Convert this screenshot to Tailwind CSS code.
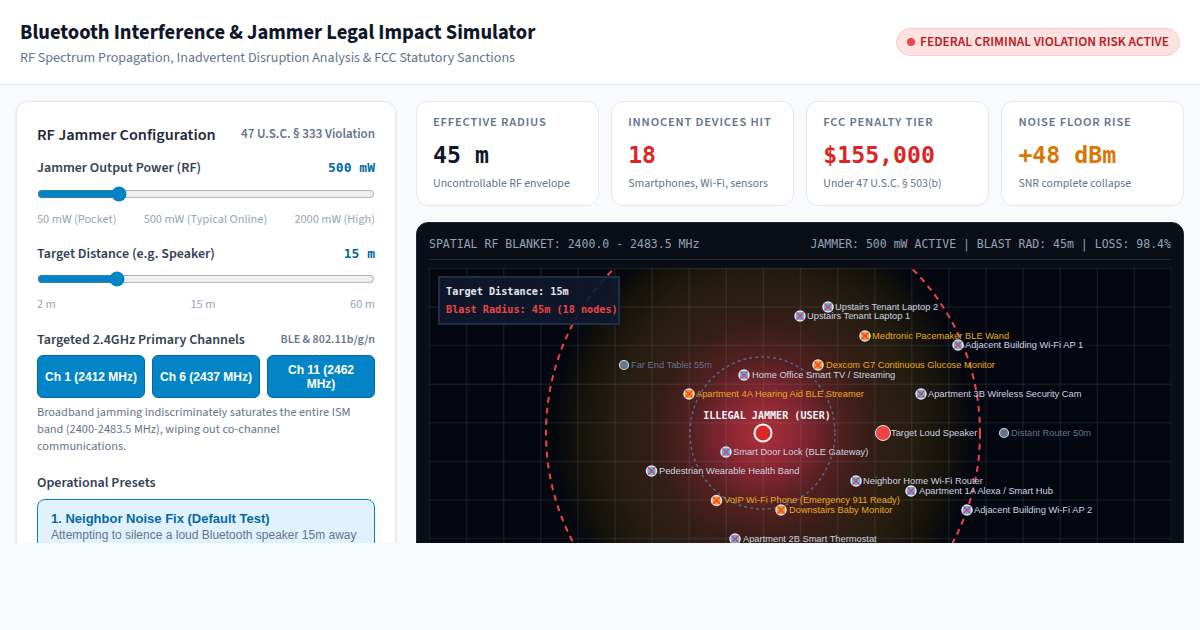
<!DOCTYPE html>
<html lang="en">
<head>
  <meta charset="UTF-8">
  <title>Bluetooth Interference & Jammer Legal Impact Simulator</title>
  <script src="https://cdn.jsdelivr.net/npm/@tailwindcss/browser@4"></script>
</head>
<body class="h-[630px] overflow-hidden bg-[#f8fafc] font-['Source_Sans_3','Noto_Sans',sans-serif] text-[#0f172a]">

  <!-- Header -->
  <header class="flex h-[85px] items-center justify-between border-b border-[#e2e8f0] bg-white px-5">
    <div class="pt-[2px]">
      <h1 class="text-[20.5px] leading-[30px] font-bold text-[#0f172a]">Bluetooth Interference &amp; Jammer Legal Impact Simulator</h1>
      <p class="text-[14.05px] leading-[20px] text-[#64748b]">RF Spectrum Propagation, Inadvertent Disruption Analysis &amp; FCC Statutory Sanctions</p>
    </div>
    <div class="flex items-center gap-[5px] rounded-full border border-[#fecaca] bg-[#fee2e2] px-[10px] py-[5px] text-[13.45px] leading-[16px] font-semibold text-[#b91c1c]">
      <span class="h-2 w-2 rounded-full bg-[#ef4444]"></span>
      FEDERAL CRIMINAL VIOLATION RISK ACTIVE
    </div>
  </header>

  <main class="flex h-[458px] items-start gap-5 overflow-hidden p-4">
    <!-- Config panel -->
    <section class="w-[380px] shrink-0 rounded-xl border border-[#e2e8f0] bg-white px-5 pt-[21px] pb-5 shadow-sm">
      <div class="flex items-center justify-between">
        <h2 class="text-[16.25px] leading-[24px] font-semibold text-[#1e293b]">RF Jammer Configuration</h2>
        <span class="text-[13px] font-semibold text-[#64748b]">47 U.S.C. § 333 Violation</span>
      </div>

      <div class="mt-[11px] flex items-center justify-between">
        <label class="text-[14px] leading-[20px] font-semibold text-[#334155]">Jammer Output Power (RF)</label>
        <span class="font-['DejaVu_Sans_Mono',monospace] text-[13px] font-bold text-[#0369a1]">500 mW</span>
      </div>
      <input type="range" min="50" max="2000" value="500" class="mt-[8px] block h-[16px] w-full accent-[#0284c7]">
      <div class="mt-[9px] flex justify-between text-[12.3px] leading-[16px] text-[#94a3b8]">
        <span>50 mW (Pocket)</span><span>500 mW (Typical Online)</span><span>2000 mW (High)</span>
      </div>

      <div class="mt-[17px] flex items-center justify-between">
        <label class="text-[14px] leading-[20px] font-semibold text-[#334155]">Target Distance (e.g. Speaker)</label>
        <span class="font-['DejaVu_Sans_Mono',monospace] text-[13px] font-bold text-[#0369a1]">15 m</span>
      </div>
      <input type="range" min="2" max="60" value="15" class="mt-[7px] block h-[16px] w-full accent-[#0284c7]">
      <div class="mt-[9px] flex justify-between text-[12.3px] leading-[16px] text-[#94a3b8]">
        <span>2 m</span><span>15 m</span><span>60 m</span>
      </div>

      <div class="mt-[18px] flex items-center justify-between">
        <label class="text-[14px] leading-[20px] font-semibold text-[#334155]">Targeted 2.4GHz Primary Channels</label>
        <span class="text-[12px] font-semibold text-[#64748b]">BLE &amp; 802.11b/g/n</span>
      </div>
      <div class="mt-[5px] grid grid-cols-3 gap-[7px] font-['Liberation_Sans',sans-serif] text-[12px] leading-[14px] font-bold text-white">
        <button class="h-[43px] rounded-md border border-[#0369a1] bg-[#0284c7] px-1">Ch 1 (2412 MHz)</button>
        <button class="h-[43px] rounded-md border border-[#0369a1] bg-[#0284c7] px-1">Ch 6 (2437 MHz)</button>
        <button class="h-[43px] rounded-md border border-[#0369a1] bg-[#0284c7] px-1">Ch 11 (2462 MHz)</button>
      </div>
      <p class="mt-[6px] pr-[14px] text-[12.3px] leading-[17px] text-[#64748b]">Broadband jamming indiscriminately saturates the entire ISM band (2400-2483.5 MHz), wiping out co-channel communications.</p>

      <h3 class="mt-[18px] text-[14px] leading-[20px] font-semibold text-[#334155]">Operational Presets</h3>
      <button class="mt-[6px] block w-full rounded-lg border border-[#0284c7] bg-[#e0f2fe] px-[13px] py-[10px] text-left font-['Liberation_Sans',sans-serif]">
        <span class="block text-[13px] leading-[17px] font-bold text-[#0369a1]">1. Neighbor Noise Fix (Default Test)</span>
        <span class="block text-[12px] leading-[17px] text-[#64748b]">Attempting to silence a loud Bluetooth speaker 15m away</span>
      </button>
    </section>

    <!-- Results -->
    <div class="min-w-0 flex-1">
      <div class="grid grid-cols-4 gap-[12.5px]">
        <div class="h-[105px] rounded-xl border border-[#e2e8f0] bg-white px-4 pt-[11px]">
          <div class="text-[12.5px] leading-[18px] font-semibold tracking-[0.85px] text-[#64748b]">EFFECTIVE RADIUS</div>
          <div class="mt-[8px] font-['DejaVu_Sans_Mono',monospace] text-[23.2px] leading-[32px] font-bold text-[#0f172a]">45 m</div>
          <div class="mt-[5px] text-[11.84px] leading-[16px] text-[#64748b]">Uncontrollable RF envelope</div>
        </div>
        <div class="h-[105px] rounded-xl border border-[#e2e8f0] bg-white px-4 pt-[11px]">
          <div class="text-[12.5px] leading-[18px] font-semibold tracking-[0.85px] text-[#64748b]">INNOCENT DEVICES HIT</div>
          <div class="mt-[8px] font-['DejaVu_Sans_Mono',monospace] text-[23.2px] leading-[32px] font-bold text-[#dc2626]">18</div>
          <div class="mt-[5px] text-[11.84px] leading-[16px] text-[#64748b]">Smartphones, Wi-Fi, sensors</div>
        </div>
        <div class="h-[105px] rounded-xl border border-[#e2e8f0] bg-white px-4 pt-[11px]">
          <div class="text-[12.5px] leading-[18px] font-semibold tracking-[0.85px] text-[#64748b]">FCC PENALTY TIER</div>
          <div class="mt-[8px] font-['DejaVu_Sans_Mono',monospace] text-[23.2px] leading-[32px] font-bold text-[#dc2626]">$155,000</div>
          <div class="mt-[5px] text-[11.84px] leading-[16px] text-[#64748b]">Under 47 U.S.C. § 503(b)</div>
        </div>
        <div class="h-[105px] rounded-xl border border-[#e2e8f0] bg-white px-4 pt-[11px]">
          <div class="text-[12.5px] leading-[18px] font-semibold tracking-[0.85px] text-[#64748b]">NOISE FLOOR RISE</div>
          <div class="mt-[8px] font-['DejaVu_Sans_Mono',monospace] text-[23.2px] leading-[32px] font-bold text-[#d97706]">+48 dBm</div>
          <div class="mt-[5px] text-[11.84px] leading-[16px] text-[#64748b]">SNR complete collapse</div>
        </div>
      </div>

      <!-- Spatial map -->
      <div class="mt-4 h-[500px] rounded-xl border border-[#1e293b] bg-[#0a0e17] px-[12px] pt-[12px]">
        <div class="flex h-[25px] items-start justify-between border-b border-[#1e293b] font-['DejaVu_Sans_Mono',monospace] text-[11.52px] leading-[18px] text-[#94a3b8]">
          <span>SPATIAL RF BLANKET: 2400.0 - 2483.5 MHz</span>
          <span>JAMMER: 500 mW ACTIVE | BLAST RAD: 45m | LOSS: 98.4%</span>
        </div>
        <div class="relative mt-[8px]">
          <svg class="block" width="742" height="460" viewBox="429 268 742 460" font-family="Liberation Sans, sans-serif" font-size="9.3">
            <defs>
              <radialGradient id="glow" gradientUnits="userSpaceOnUse" cx="0" cy="0" r="1" gradientTransform="translate(763 433) scale(217 226)">
                <stop offset="0" stop-color="#b0303a"/>
                <stop offset="0.2" stop-color="#7e2530"/>
                <stop offset="0.33" stop-color="#54201f"/>
                <stop offset="0.5" stop-color="#351e16"/>
                <stop offset="0.7" stop-color="#241d0f"/>
                <stop offset="0.88" stop-color="#12100c"/>
                <stop offset="1" stop-color="#05080f" stop-opacity="0"/>
              </radialGradient>
              <g id="hit">
                <circle r="5" fill="#4db8ec" stroke="#e2e8f0" stroke-width="1.5"/>
                <path d="M-3.5 -3.5 3.5 3.5M3.5 -3.5 -3.5 3.5" stroke="#e5405a" stroke-width="1.5"/>
              </g>
              <g id="crit">
                <circle r="5" fill="#f59e0b" stroke="#e2e8f0" stroke-width="1.5"/>
                <path d="M-3.5 -3.5 3.5 3.5M3.5 -3.5 -3.5 3.5" stroke="#ef4444" stroke-width="1.5"/>
              </g>
              <g id="safe">
                <circle r="4.5" fill="#64748b" stroke="#cbd5e1" stroke-width="1.2"/>
              </g>
            </defs>
            <rect x="429" y="268" width="742" height="460" fill="#04070f"/>
            <ellipse cx="763" cy="433" rx="217" ry="226" fill="url(#glow)"/>
            <g stroke="#94a3b8" stroke-opacity="0.11" stroke-width="1.5" fill="none">
              <path d="M429.5 268V728M466.6 268V728M503.7 268V728M540.8 268V728M577.9 268V728M615 268V728M652.1 268V728M689.2 268V728M726.3 268V728M763.4 268V728M800.5 268V728M837.6 268V728M874.7 268V728M911.8 268V728M948.9 268V728M986 268V728M1023.1 268V728M1060.2 268V728M1097.3 268V728M1134.4 268V728M1171 268V728"/>
              <path d="M429 268.5H1171M429 307H1171M429 345.6H1171M429 384.2H1171M429 422.8H1171M429 461.4H1171M429 500H1171M429 538.6H1171"/>
            </g>
            <ellipse cx="763" cy="433" rx="217" ry="226" fill="none" stroke="#ef4444" stroke-width="2" stroke-dasharray="6 5"/>
            <ellipse cx="762.5" cy="433" rx="72.5" ry="76" fill="none" stroke="#4a6a90" stroke-width="1.5" stroke-dasharray="3 3"/>

            <g fill="#cbd5e1">
              <use href="#hit" x="828" y="307"/><text x="835" y="310">Upstairs Tenant Laptop 2</text>
              <use href="#hit" x="800" y="316"/><text x="807" y="319">Upstairs Tenant Laptop 1</text>
              <use href="#hit" x="958" y="345"/><text x="965" y="348">Adjacent Building Wi-Fi AP 1</text>
              <use href="#hit" x="744" y="375"/><text x="752" y="378">Home Office Smart TV / Streaming</text>
              <use href="#hit" x="921" y="394"/><text x="928" y="397">Apartment 3B Wireless Security Cam</text>
              <use href="#hit" x="726" y="452"/><text x="733" y="455">Smart Door Lock (BLE Gateway)</text>
              <use href="#hit" x="651.5" y="471"/><text x="659" y="474">Pedestrian Wearable Health Band</text>
              <use href="#hit" x="856" y="481"/><text x="863" y="484">Neighbor Home Wi-Fi Router</text>
              <use href="#hit" x="911" y="491"/><text x="919" y="494">Apartment 1A Alexa / Smart Hub</text>
              <use href="#hit" x="967" y="510"/><text x="974" y="513">Adjacent Building Wi-Fi AP 2</text>
              <use href="#hit" x="735" y="539"/><text x="743" y="542">Apartment 2B Smart Thermostat</text>
            </g>
            <g fill="#e8ab1f">
              <use href="#crit" x="865" y="336"/><text x="872" y="339">Medtronic Pacemaker BLE Wand</text>
              <use href="#crit" x="818" y="365"/><text x="826" y="368">Dexcom G7 Continuous Glucose Monitor</text>
              <use href="#crit" x="689" y="394"/><text x="696" y="397">Apartment 4A Hearing Aid BLE Streamer</text>
              <use href="#crit" x="716.5" y="500.5"/><text x="724" y="503">VoIP Wi-Fi Phone (Emergency 911 Ready)</text>
              <use href="#crit" x="781" y="510"/><text x="789" y="513">Downstairs Baby Monitor</text>
            </g>
            <g fill="#64748b">
              <use href="#safe" x="624" y="365"/><text x="631" y="368">Far End Tablet 55m</text>
              <use href="#safe" x="1004" y="433"/><text x="1011" y="436">Distant Router 50m</text>
            </g>

            <text x="767" y="419" text-anchor="middle" font-family="DejaVu Sans Mono, monospace" font-size="10.1" font-weight="bold" fill="#f1f5f9">ILLEGAL JAMMER (USER)</text>
            <circle cx="763" cy="433" r="8.5" fill="#dc2626" stroke="#fff" stroke-width="2"/>
            <circle cx="883" cy="433" r="7.5" fill="#ef4444" stroke="#e2e8f0" stroke-width="1"/>
            <text x="891" y="436" fill="#cbd5e1">Target Loud Speaker</text>
          </svg>

          <div class="absolute top-[8px] left-[9px] h-[49px] w-[182px] border-2 border-[#1e2f48] bg-[#0f1a2c]/90 px-[6px] py-[5px] font-['DejaVu_Sans_Mono',monospace] text-[10.2px] leading-[18px] font-bold">
            <div class="text-[#e2e8f0]">Target Distance: 15m</div>
            <div class="whitespace-nowrap text-[#ef4444]">Blast Radius: 45m (18 nodes)</div>
          </div>
        </div>
      </div>
    </div>
  </main>
</body>
</html>
